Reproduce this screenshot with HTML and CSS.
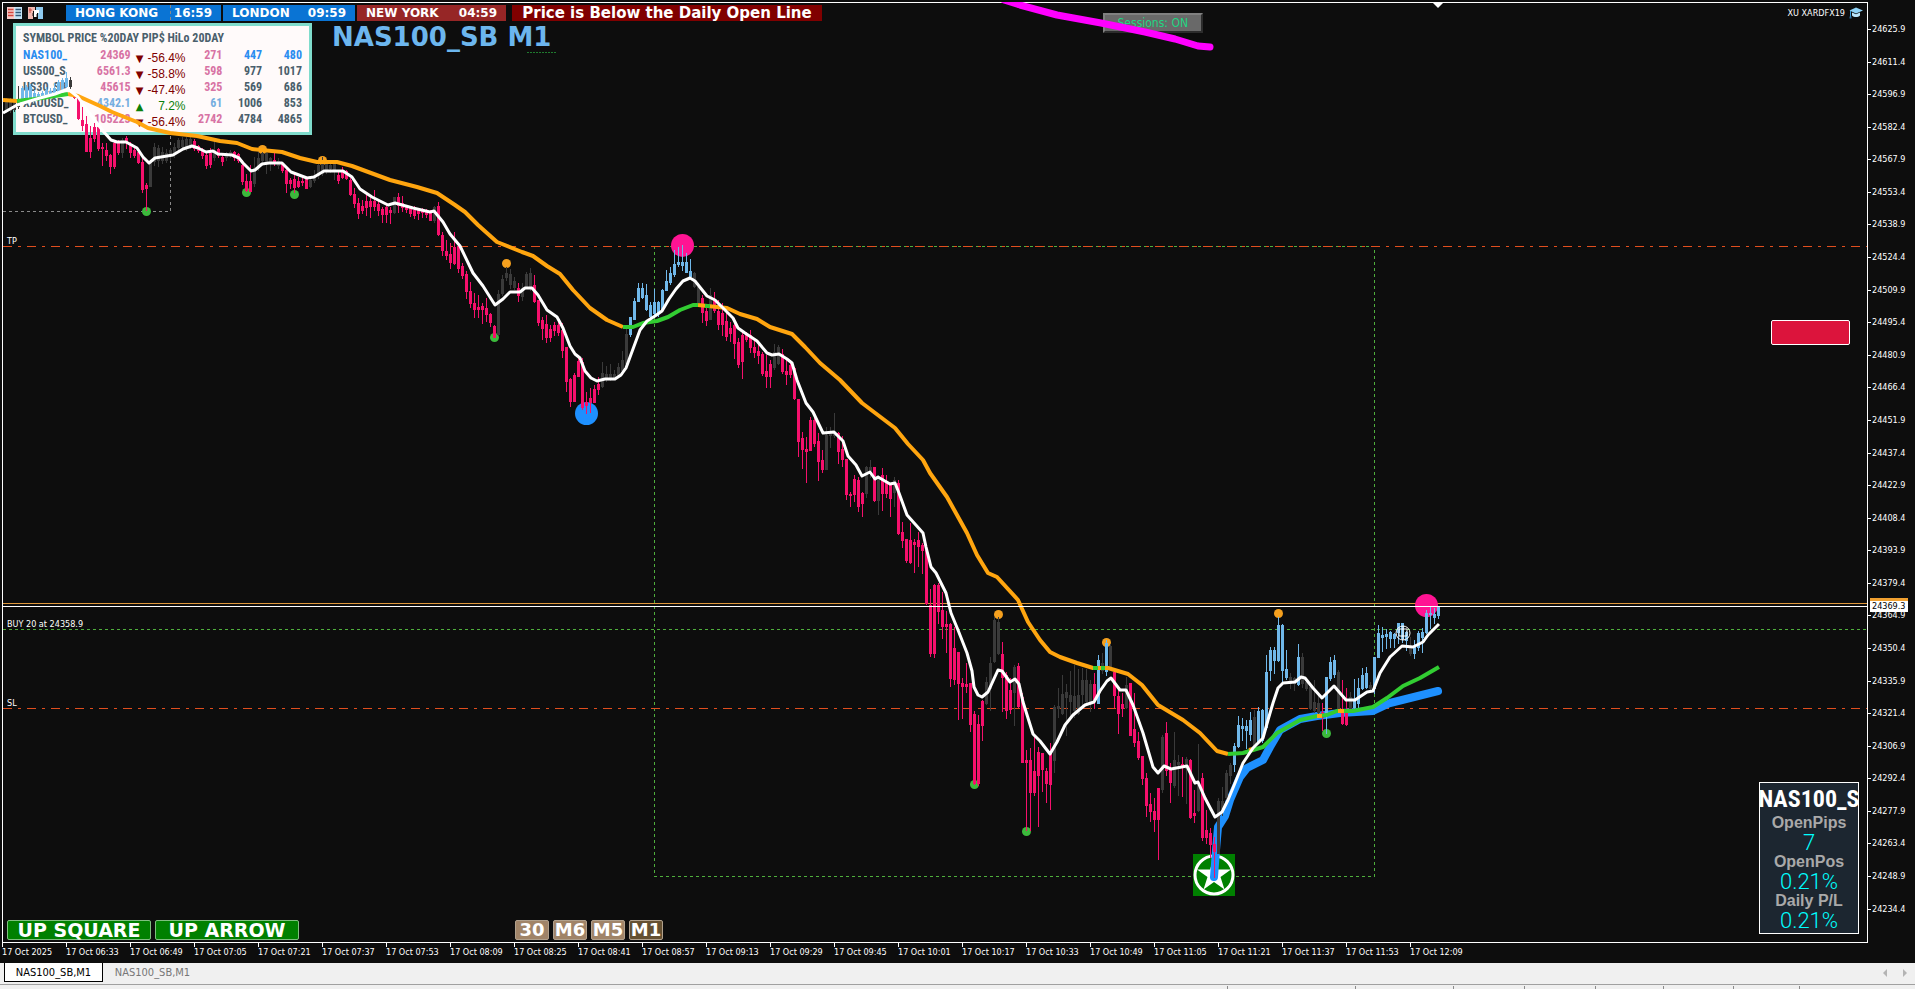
FILE: index.html
```html
<!DOCTYPE html>
<html lang="en">
<head>
    <meta charset="UTF-8">
    <meta name="viewport" content="width=device-width, initial-scale=1.0">
    <title>NAS100_SB,M1</title>
    <link rel="stylesheet" href="styles.css">
</head>
<body>
    <div class="terminal">
        <main class="chart">
            <div class="chart-main">
                <section class="plot">
                    <div class="top-row">
                        <div class="tools">
                            <svg class="tool-icon" viewBox="0 0 15 12" aria-hidden="true">
                                <rect x="0" y="0" width="15" height="12" fill="#f4f4f4"/>
                                <path d="M0 0h7.500v12h-7.500z" fill="#f6c9c5"/>
                                <path d="M7.500 0h7.500v12h-7.500z" fill="#c5e4f6"/>
                                <path d="M1 2.500h5.500M1 5.500h5.500M1 8.500h5.500" stroke="#d4453c" stroke-width="1.600"/>
                                <path d="M8.500 2.500h5.500M8.500 5.500h5.500M8.500 8.500h5.500" stroke="#31597a" stroke-width="1.600"/>
                            </svg>
                            <svg class="tool-icon" viewBox="0 0 15 12" aria-hidden="true">
                                <path d="M0 0h7v4H5v8H0z" fill="#f3b9b1"/>
                                <path d="M8 0h7v12h-5V5H8z" fill="#8fcbf0"/>
                                <path d="M2 1v5M1 3h3" stroke="#cf4d43" stroke-width="1"/>
                                <path d="M6 3h5v3H9v4H6z" fill="#fff"/>
                                <path d="M9 7v3M5 6v3" stroke="#222" stroke-width="1"/>
                            </svg>
                        </div>
                        <div class="sessions">
                            <div class="session open hong-kong"><span>HONG KONG</span><span>16:59</span></div>
                            <div class="session open london"><span>LONDON</span><span>09:59</span></div>
                            <div class="session closed new-york"><span>NEW YORK</span><span>04:59</span></div>
                        </div>
                        <div class="notice">Price is Below the Daily Open Line</div>
                        <div class="expert">
                            <span>XU XARDFX19</span>
                            <svg class="cap-icon" viewBox="0 0 14 12" aria-hidden="true">
                                <path d="M7 0.500L14 3.500L7 6.500L0.500 3.500z" fill="#8fd3f7"/>
                                <path d="M3 5.500v3c2 2 6 2 8 0v-3L7 7.200z" fill="#b9e4fb"/>
                                <path d="M1.500 4v6" stroke="#3b9bd8" stroke-width="1"/>
                                <rect x="0.500" y="9.500" width="2" height="2" fill="#2d6c9c"/>
                            </svg>
                        </div>
                    </div>
                    <div class="second-row">
                        <table class="scanner">
                            <caption>SYMBOL PRICE %20DAY PIP$ HiLo 20DAY</caption>
                            <tbody>
                                <tr class="current"><th scope="row">NAS100_</th><td class="down">24369</td><td class="pct fall"><span>▼</span>-56.4%</td><td class="down">271</td><td>447</td><td>480</td></tr>
                                <tr><th scope="row">US500_S</th><td class="down">6561.3</td><td class="pct fall"><span>▼</span>-58.8%</td><td class="down">598</td><td>977</td><td>1017</td></tr>
                                <tr><th scope="row">US30_SB</th><td class="down">45615</td><td class="pct fall"><span>▼</span>-47.4%</td><td class="down">325</td><td>569</td><td>686</td></tr>
                                <tr><th scope="row">XAUUSD_</th><td class="up">4342.1</td><td class="pct rise"><span>▲</span>7.2%</td><td class="up">61</td><td>1006</td><td>853</td></tr>
                                <tr><th scope="row">BTCUSD_</th><td class="down">105223</td><td class="pct fall"><span>▼</span>-56.4%</td><td class="down">2742</td><td>4784</td><td>4865</td></tr>
                            </tbody>
                        </table>
                        <h1>NAS100_SB M1</h1>
                    </div>
                    <button class="sessions-toggle" type="button">Sessions: ON</button>
                    <button class="alert-button" type="button" aria-label="Alert"></button>

                    <aside class="account">
                        <h2>NAS100_S</h2>
                        <dl>
                            <dt>OpenPips</dt><dd>7</dd>
                            <dt>OpenPos</dt><dd>0.21%</dd>
                            <dt>Daily P/L</dt><dd>0.21%</dd>
                        </dl>
                    </aside>

                    <div class="bottom-row">
                        <button class="signal" type="button">UP SQUARE</button>
                        <button class="signal" type="button">UP ARROW</button>
                        <div class="timeframes">
                            <button type="button">30</button>
                            <button type="button">M6</button>
                            <button type="button">M5</button>
                            <button class="active" type="button">M1</button>
                        </div>
                    </div>

                    <svg class="canvas" viewBox="2 2 1866 941" preserveAspectRatio="none">
                        <g class="crisp">
                            <path class="dash-gray" d="M170.500 5V21M170.500 136V211.500H3"/>
                            <path class="dash-green" d="M654.500 246V876.500H1374.500V246.500H654"/>
                            <path class="dash-green" d="M3 629.500H1867"/>
                            <path class="dash-stop" d="M3 246.500H1867M3 708.500H1867"/>
                            <path class="ask-line" d="M3 603.500H1867"/>
                            <path class="dash-dark" d="M527 52.500H556"/>
                        </g>
                        <path d="M1433 3h10l-5 5z" fill="#fff"/>
                        <g id="dots"></g>
                        <rect x="1193" y="854" width="42" height="42" fill="#008000"/>
                        <circle cx="1214" cy="875" r="19" fill="none" stroke="#fff" stroke-width="3"/>
                        <path d="M1214 857l4 12.500h13l-10.500 7.500l4 12.500l-10.500-7.500l-10.500 7.500l4-12.500l-10.500-7.500h13z" fill="#fff"/>
                        <path class="slow" d="M1214 877L1216 850L1218 827L1225 816L1230 800L1240 777L1247 768L1263 760L1270 747L1280 730L1300 719L1317 716L1340 713L1373 711L1390 703L1438 691"/>
                        <path class="daily" d="M1004 0L1020 5L1057 15L1101 23L1145 32L1175 39L1198 46L1210 47"/>
                        <g id="candles" class="crisp"></g>
                        <path class="trend" d="M3 100L17 101M68 94L78 96L100 106L112 112L137 122L148 128L170 133L197 136L220 141L237 143L252 149L282 152L300 158L317 162L337 162L352 166L390 180L417 187L437 193L455 205L465 212L478 225L497 242L522 252L533 256L547 266L560 274L573 290L590 308L607 320L623 327M698 305L727 308L740 314L757 319L770 327L792 334L805 347L820 363L840 380L862 403L895 428L908 444L923 460L930 473L947 497L967 533L977 555L988 573L997 577L1018 600L1028 622L1040 640L1050 652L1060 657L1077 663L1093 668L1108 668L1128 674L1142 685L1158 705L1183 720L1200 733L1217 751L1228 754"/>
                        <path class="trend bull" d="M17 101L35 99L68 94M623 327L633 327L643 323L657 321L668 317L680 310L693 305L698 305M705 306L710 306M1093 668L1098 668M1101 668L1105 668M1228 754L1243 753L1263 747L1277 733L1300 720L1317 716L1327 715L1337 711L1353 711L1373 707L1387 698L1403 686L1420 678L1439 667"/>
                        <path class="trend" d="M1249 750L1253 749M1317 716L1322 716M1338 711L1344 711"/>
                        <path class="fast" d="M3 113L17 105L40 98L55 94L68 89L78 97L90 114L103 131L111 140L117 142L126 142L137 148L143 157L149 163L155 158L173 155L183 149L192 146L198 148L206 152L213 151L218 154L232 155L239 158L243 163L251 171L255 170L262 164L269 163L282 163L291 172L307 178L314 177L324 171L343 171L352 177L360 189L372 197L388 205L395 203L413 208L430 212L434 211L443 222L450 234L460 246L473 273L483 286L495 305L503 299L510 292L520 292L525 288L532 288L538 295L547 310L557 317L563 328L570 346L575 354L580 358L585 371L591 378L597 381L605 379L615 379L621 375L626 368L633 349L640 330L647 321L655 316L662 311L669 299L676 289L683 281L690 278L695 281L707 296L715 300L722 307L733 318L738 328L745 333L757 341L767 353L772 355L779 354L787 359L792 363L797 380L806 403L813 412L823 433L834 432L843 441L848 456L856 465L862 476L870 472L875 479L878 477L890 484L895 483L899 493L907 515L923 533L926 547L931 567L936 573L946 593L951 613L958 630L967 653L972 671L974 687L978 695L982 697L988 692L993 681L998 670L1002 671L1010 682L1015 679L1019 684L1023 702L1033 734L1040 741L1050 754L1057 742L1065 725L1073 715L1085 705L1094 702L1100 691L1107 681L1111 678L1120 690L1126 690L1133 705L1143 733L1153 767L1158 773L1164 766L1171 769L1187 766L1195 783L1198 782L1205 798L1215 817L1222 812L1228 800L1235 783L1243 763L1253 748L1263 738L1268 720L1273 703L1278 688L1283 683L1295 682L1301 677L1305 678L1313 688L1322 698L1334 686L1346 700L1355 700L1367 692L1373 691L1380 673L1390 657L1402 646L1413 647L1423 642L1428 635L1439 624"/>
                        <g class="entry-mark">
                            <circle cx="1403" cy="633" r="7"/>
                            <path d="M1399 629h8v7h-8zM1403 626v14"/>
                        </g>
                        <path class="bid-line crisp" d="M3 606.500H1867"/>
                        <text class="line-label" x="7" y="244">TP</text>
                        <text class="line-label" x="7" y="627">BUY 20 at 24358.9</text>
                        <text class="line-label" x="7" y="706">SL</text>
                    </svg>
                </section>

                <div class="price-axis">
                    <ol>
                        <li>24625.9</li><li>24611.4</li><li>24596.9</li><li>24582.4</li><li>24567.9</li><li>24553.4</li><li>24538.9</li>
                        <li>24524.4</li><li>24509.9</li><li>24495.4</li><li>24480.9</li><li>24466.4</li><li>24451.9</li><li>24437.4</li>
                        <li>24422.9</li><li>24408.4</li><li>24393.9</li><li>24379.4</li><li>24364.9</li><li>24350.4</li><li>24335.9</li>
                        <li>24321.4</li><li>24306.9</li><li>24292.4</li><li>24277.9</li><li>24263.4</li><li>24248.9</li><li>24234.4</li>
                    </ol>
                    <span class="price-tag">24369.3</span>
                </div>
            </div>
            <ol class="time-axis">
                <li>17 Oct 2025</li><li>17 Oct 06:33</li><li>17 Oct 06:49</li><li>17 Oct 07:05</li><li>17 Oct 07:21</li><li>17 Oct 07:37</li>
                <li>17 Oct 07:53</li><li>17 Oct 08:09</li><li>17 Oct 08:25</li><li>17 Oct 08:41</li><li>17 Oct 08:57</li><li>17 Oct 09:13</li>
                <li>17 Oct 09:29</li><li>17 Oct 09:45</li><li>17 Oct 10:01</li><li>17 Oct 10:17</li><li>17 Oct 10:33</li><li>17 Oct 10:49</li>
                <li>17 Oct 11:05</li><li>17 Oct 11:21</li><li>17 Oct 11:37</li><li>17 Oct 11:53</li><li>17 Oct 12:09</li>
            </ol>
        </main>

        <nav class="tab-bar">
            <a class="tab active" href="#">NAS100_SB,M1</a>
            <a class="tab" href="#">NAS100_SB,M1</a>
            <div class="tab-scroll">
                <button class="prev" type="button" aria-label="Previous tab"></button>
                <button class="next" type="button" aria-label="Next tab"></button>
            </div>
        </nav>
        <footer class="status-bar">
            <span class="w128"></span><span class="w98"></span><span class="w71"></span><span class="w71"></span><span class="w68"></span><span class="w70"></span><span class="w66"></span><span class="w116"></span>
        </footer>
    </div>
    <script src="chart.js"></script>
</body>
</html>
```

FILE: styles.css
```css
* {
    margin: 0;
    padding: 0;
    box-sizing: border-box;
}

body {
    background: #0d0d0d;
    color: white;
    font-family: "DejaVu Sans Condensed", "DejaVu Sans", sans-serif;
    font-size: 9px;
}

ol {
    list-style: none;
}

button {
    font-family: inherit;
    cursor: pointer;
}

.terminal {
    height: 100vh;
    display: flex;
    flex-direction: column;
    overflow: hidden;
}

.chart {
    flex: 1;
    display: flex;
    flex-direction: column;
    min-height: 0;
}

.chart-main {
    flex: 1;
    display: flex;
    padding: 2px 0 0 2px;
    min-height: 0;
}

.plot {
    flex: 1;
    position: relative;
    border: 1px solid white;
    padding: 2px 4px;
}

/* Header over the chart */
.top-row {
    display: flex;
    align-items: center;
    height: 16px;
}

.tools {
    display: flex;
    gap: 6px;
    width: 59px;
}

.tool-icon {
    width: 15px;
    height: 12px;
}

.sessions {
    display: flex;
    gap: 2px;
    margin-right: 6px;
}

.session {
    display: flex;
    justify-content: space-between;
    height: 16px;
    padding: 0 9px;
    font-family: "DejaVu Sans", sans-serif;
    font-size: 12px;
    font-weight: bold;
    line-height: 16px;
    white-space: nowrap;
}

.open {
    background: #0a74d4;
}

.closed {
    background: #962626;
}

.hong-kong {
    width: 155px;
}

.london {
    width: 132px;
}

.new-york {
    width: 149px;
}

.notice {
    height: 16px;
    width: 310px;
    background: #800000;
    font-family: "DejaVu Sans", sans-serif;
    font-size: 15px;
    font-weight: bold;
    line-height: 16px;
    text-align: center;
    white-space: nowrap;
}

.expert {
    display: flex;
    align-items: center;
    gap: 4px;
    margin-left: auto;
}

.cap-icon {
    width: 14px;
    height: 12px;
}

.second-row {
    display: flex;
    align-items: flex-start;
    gap: 20px;
    padding: 2px 6px;
}

.second-row h1 {
    color: #6cb6ee;
    font-family: "DejaVu Sans", sans-serif;
    font-size: 26px;
    font-weight: bold;
    line-height: 28px;
}

/* Symbol scanner */
.scanner {
    display: block;
    width: 299px;
    height: 112px;
    padding: 5px 7px;
    border: 3px solid #7fdccc;
    background: #fffafa;
    border-spacing: 0;
    color: #4a5f6c;
    font-family: Impact, "Liberation Sans Narrow", "Roboto Condensed", "Open Sans Condensed", "DejaVu Sans Condensed", sans-serif;
    font-size: 12px;
    font-weight: bold;
}

.scanner caption {
    padding-bottom: 4px;
    line-height: 14px;
    text-align: left;
    white-space: nowrap;
}

.scanner th {
    width: 58px;
    text-align: left;
}

.scanner td {
    width: 40px;
    text-align: right;
}

.scanner th,
.scanner td {
    height: 16px;
    line-height: 12px;
    vertical-align: top;
}

.scanner td:nth-child(2) {
    width: 50px;
}

.scanner td:nth-child(4) {
    width: 37px;
}

.scanner td.pct {
    width: 55px;
    padding: 3px 0 0 5px;
    font-family: "Liberation Sans", sans-serif;
    font-weight: normal;
    line-height: 13px;
}

.scanner .pct span {
    float: left;
    font-family: "DejaVu Sans", sans-serif;
    font-size: 10px;
}

.scanner .current {
    color: #2a8cf0;
}

.scanner .down {
    color: #d873a4;
}

.scanner .up {
    color: #76aee0;
}

.scanner .fall {
    color: #800000;
}

.scanner .rise {
    color: #0a800a;
}

/* Objects pinned to the chart */
.sessions-toggle {
    position: absolute;
    top: 10px;
    left: 59%;
    width: 100px;
    height: 20px;
    background: #696969;
    border: 2px outset #808080;
    color: #22d683;
    font-size: 12px;
    line-height: 16px;
}

.alert-button {
    position: absolute;
    top: 317px;
    right: 17px;
    width: 79px;
    height: 25px;
    background: #dc143c;
    border: 1px solid white;
    border-radius: 2px;
}

.account {
    position: absolute;
    right: 8px;
    bottom: 8px;
    width: 100px;
    height: 152px;
    padding-top: 1px;
    border: 1px solid white;
    background: #1c2630;
    text-align: center;
    overflow: hidden;
}

.account h2 {
    display: flex;
    justify-content: center;
    font-family: Impact, "Liberation Sans Narrow", "Roboto Condensed", "Open Sans Condensed", "DejaVu Sans Condensed", sans-serif;
    font-size: 24px;
    font-weight: bold;
    line-height: 30px;
}

.account dt {
    color: #a9a9a9;
    font-family: "Liberation Sans", sans-serif;
    font-size: 16px;
    font-weight: bold;
    line-height: 18px;
}

.account dd {
    color: #0ff;
    font-family: Roboto, sans-serif;
    font-size: 22px;
    font-weight: 300;
    line-height: 21px;
}

.bottom-row {
    position: absolute;
    left: 4px;
    bottom: 2px;
    display: flex;
    gap: 4px;
}

.bottom-row button {
    height: 20px;
    border: 1px solid #b0a08c;
    border-radius: 2px;
    background: #a08468;
    color: white;
    font-family: "DejaVu Sans", sans-serif;
    font-size: 18px;
    font-weight: bold;
    line-height: 18px;
    white-space: nowrap;
}

.bottom-row .signal {
    width: 144px;
    border-color: #7fbf7f;
    background: #008000;
    font-size: 19px;
}

.timeframes {
    display: flex;
    gap: 4px;
    margin-left: 212px;
}

.timeframes button {
    display: flex;
    align-items: center;
    justify-content: center;
    width: 34px;
}

.bottom-row .active {
    background: #645032;
}

/* Chart drawing */
.canvas {
    position: absolute;
    top: -1px;
    left: -1px;
    width: calc(100% + 2px);
    height: calc(100% + 2px);
    pointer-events: none;
}

.canvas path {
    fill: none;
}

.canvas path[fill] {
    fill: white;
}

.crisp {
    shape-rendering: crispEdges;
}

.canvas .dash-gray {
    stroke: #8a8a8a;
    stroke-dasharray: 3 3;
}

.canvas .dash-green {
    stroke: #4fae3c;
    stroke-dasharray: 3 3;
}

.canvas .dash-dark {
    stroke: #1f7a2e;
    stroke-dasharray: 2 1;
}

.canvas .dash-stop {
    stroke: #e04e1e;
    stroke-dasharray: 9 6 3 6;
}

.canvas .ask-line {
    stroke: #e0983c;
}

.canvas .bid-line {
    stroke: white;
}

.canvas .slow {
    stroke: #1e90ff;
    stroke-width: 8;
    stroke-linejoin: round;
    stroke-linecap: round;
}

.canvas .daily {
    stroke: #f0f;
    stroke-width: 7;
    stroke-linejoin: round;
    stroke-linecap: round;
}

.canvas .trend {
    stroke: #ffa50f;
    stroke-width: 4;
    stroke-linejoin: round;
}

.canvas .bull {
    stroke: #32cd32;
}

.canvas .fast {
    stroke: white;
    stroke-width: 3;
    stroke-linejoin: round;
}

.entry-mark {
    fill: none;
    stroke: white;
    stroke-width: 1;
}

.line-label {
    fill: white;
    font-size: 9px;
}

/* Axes */
.price-axis {
    position: relative;
    width: 47px;
}

.price-axis ol {
    height: 100%;
    padding: 22px 0 28px;
    display: flex;
    flex-direction: column;
    justify-content: space-between;
}

.price-axis li {
    display: flex;
    align-items: center;
    gap: 1px;
    height: 11px;
    line-height: 11px;
}

.price-axis li::before {
    content: "";
    width: 3px;
    height: 1px;
    background: white;
}

.price-tag {
    position: absolute;
    top: 63.3%;
    left: 2px;
    height: 14px;
    padding: 0 3px 0 2px;
    border-top: 3px solid #f0a030;
    background: white;
    color: black;
    line-height: 11px;
}

.time-axis {
    display: flex;
    height: 20px;
    padding-left: 2px;
}

.time-axis li {
    flex: none;
    width: 64px;
    line-height: 11px;
    white-space: nowrap;
}

.time-axis li::before {
    content: "";
    display: block;
    width: 1px;
    height: 4px;
    background: white;
}

/* Window tabs */
.tab-bar {
    display: flex;
    align-items: flex-start;
    height: 21px;
    padding: 0 4px;
    background: #f0f0f0;
}

.tab {
    width: 99px;
    height: 19px;
    color: #777;
    font-size: 11px;
    line-height: 20px;
    text-align: center;
    text-decoration: none;
}

.tab.active {
    border: 1px solid black;
    border-top: 0;
    background: white;
    color: black;
}

.tab-scroll {
    display: flex;
    gap: 16px;
    margin: 6px 4px 0 auto;
}

.tab-scroll button {
    width: 4px;
    height: 8px;
    border: 4px solid transparent;
    background: none;
}

.tab-scroll .prev {
    border-left: 0;
    border-right-color: #b4b4b4;
}

.tab-scroll .next {
    border-right: 0;
    border-left-color: #b4b4b4;
}

.status-bar {
    display: flex;
    justify-content: flex-end;
    height: 5px;
    padding-top: 1px;
    border-top: 1px solid #a0a0a0;
    background: #f0f0f0;
}

.status-bar span {
    border-left: 1px solid #8c8c8c;
}

.w66 { width: 66px; }
.w68 { width: 68px; }
.w70 { width: 70px; }
.w71 { width: 71px; }
.w98 { width: 98px; }
.w116 { width: 116px; }
.w128 { width: 128px; }
```

FILE: chart.js
```js
// One bar per token: colour, then high, body top, body bottom, low (4px per bar)
const bars = `
k98,100,110,112 k98,100,110,112 k99,101,109,111 k86,99,106,108 b86,88,98,104 b85,87,97,101 b84,86,98,100 b90,93,97,98 b92,94,96,98 b91,93,97,98
b87,90,96,97 b88,91,95,97 b83,88,93,95 b80,82,91,93 b78,80,90,91 b72,78,86,90 k77,80,86,88 r94,95,97,98 r97,98,118,119 r107,120,125,130
r116,124,151,151 r126,138,151,157 r123,127,138,141 r126,127,148,150 r143,147,148,165 r143,150,155,160 r154,155,166,173 r140,143,166,168 r140,143,152,154 k138,140,152,157
r136,138,142,148 r142,145,152,157 r148,150,155,157 r150,152,162,163 r158,162,189,192 r183,185,188,210 k160,162,186,186 k143,147,161,165 k145,148,160,166 k147,152,160,163
k149,153,160,162 k148,150,155,160 k143,147,152,157 k138,140,147,150 k137,140,146,150 k137,139,146,150 k135,139,145,148 r139,141,148,150 r145,146,150,152 r148,150,155,158
r152,155,165,168 r148,153,164,167 k140,150,157,160 r148,149,155,157 r153,157,161,165 k152,153,157,160 k150,152,155,157 r151,152,157,160 r153,154,160,162 r160,165,181,184
r174,181,190,191 r165,181,191,191 k157,168,183,186 k151,158,166,170 k150,153,160,165 k152,153,163,173 k157,158,162,170 r153,160,163,165 k158,161,165,168 r162,163,170,172
r168,170,183,192 r178,180,183,188 r174,179,187,192 r177,181,186,187 r178,181,182,185 r178,179,188,188 k179,180,186,187 k170,175,180,182 k163,165,175,178 k157,162,173,175
k160,163,170,173 k160,165,168,172 k162,164,170,179 r172,175,180,183 r167,170,177,178 r170,171,178,179 r178,180,194,195 r188,194,203,207 r198,203,213,218 r200,206,210,213
r192,201,207,215 r198,201,206,217 r190,201,206,210 r200,204,210,215 r207,209,214,222 r205,207,214,222 r207,210,212,223 k197,197,212,213 r193,197,205,212 r196,203,207,211
r205,207,209,212 r207,208,213,216 r206,210,215,218 r208,210,213,219 r208,211,212,217 r209,211,214,217 r210,213,220,220 k206,207,220,222 r202,206,234,235 r232,235,250,255
r240,251,255,259 r243,254,262,268 r232,247,263,264 r243,246,268,272 r263,266,275,278 r271,274,291,298 r282,291,303,307 r293,303,309,317 r295,307,309,317 r303,306,309,323
r298,308,314,321 r313,314,322,326 r325,326,337,337 k290,294,334,335 k275,279,293,295 k267,273,277,280 k269,274,284,288 k277,281,287,289 r283,288,295,301 k283,288,296,300
k272,274,287,288 k268,273,287,290 r275,285,301,302 r300,300,322,325 r317,320,328,339 r315,324,337,342 r325,329,337,341 r322,325,330,335 r322,325,332,335 r323,330,350,357
r347,347,381,391 r378,379,401,406 r373,375,401,401 r357,361,376,376 r358,362,407,409 r392,402,405,413 r388,398,402,412 r385,389,402,402 r377,384,389,394 k362,373,386,387
k366,374,378,381 k364,374,378,380 k370,374,377,379 k363,367,375,377 k351,360,370,372 k326,334,363,365 b317,317,334,336 b298,301,319,319 b283,288,301,301 b283,288,297,298
b284,295,309,310 b302,305,316,322 b289,302,313,317 b301,302,313,316 b289,290,309,310 b270,281,290,290 b267,273,282,284 b250,264,274,276 b247,262,264,266 b245,262,265,270
b253,262,272,272 b259,271,276,277 k272,273,286,287 k283,287,302,303 r295,298,312,322 r307,311,320,325 k288,295,319,319 r292,300,310,312 r300,311,324,329 r303,313,324,335
r310,321,336,340 r322,328,333,341 r318,325,343,358 r338,342,364,367 r332,335,361,378 r332,335,339,341 r330,335,347,352 r338,347,352,357 r343,351,355,363 r352,354,373,375
r355,371,376,387 r360,364,376,387 k344,352,367,369 k345,347,363,364 r349,354,371,373 r358,371,374,384 r363,365,374,377 r367,368,398,399 r399,399,441,456 r432,438,449,468
r437,449,451,482 r417,420,450,450 r417,420,443,446 r433,441,461,480 r450,460,469,472 k427,435,469,469 k427,433,435,447 k413,432,435,437 r432,433,451,463 r436,449,459,466
r459,459,494,499 r492,494,495,506 r475,479,494,501 r477,480,506,511 r492,493,503,516 k466,467,493,497 k460,467,470,477 r467,467,500,501 k475,478,500,514 r468,475,493,510
r475,483,493,497 r483,483,498,516 k477,480,492,506 r480,483,533,534 r522,532,540,547 r539,539,560,562 r523,540,562,563 r539,542,544,572 r532,540,546,566 r543,545,550,573
r548,550,603,604 r589,605,653,656 r584,585,653,657 r583,585,611,623 r592,610,626,638 r611,624,626,652 r623,624,678,686 r627,648,679,684 r652,652,683,719 r678,683,686,718
r663,684,686,692 r683,683,724,731 r711,714,783,784 r715,724,783,785 r700,701,725,740 k677,682,703,704 k657,663,688,710 k617,620,661,662 k617,622,653,654 r642,654,677,711
r672,675,710,718 r678,690,709,713 k665,667,692,725 r663,666,706,707 r693,697,762,762 r750,760,762,830 r748,760,792,830 r737,771,792,795 r747,752,775,826 r753,753,769,791
r768,771,783,802 r743,753,784,809 k705,707,760,772 k688,706,708,717 k675,694,713,714 k684,692,697,735 k671,695,701,717 k665,696,710,717 k669,695,713,714 k668,680,694,705
k669,680,701,703 k680,684,703,711 r673,684,699,708 b655,660,703,703 k653,663,670,673 b640,643,671,675 k644,646,667,668 r672,672,695,707 r687,696,713,733 r693,704,708,716
k677,685,707,708 r683,683,735,735 r693,729,742,746 r732,741,757,759 r756,756,778,784 r773,778,805,816 r793,804,811,821 r798,811,819,831 r788,788,819,859 k735,737,789,792
r722,733,770,775 r763,770,782,802 k732,760,785,787 k755,762,764,795 r757,764,766,796 k757,759,768,803 r759,760,817,818 r790,813,815,822 k744,782,810,811 r773,778,837,840
r810,830,837,843 r828,833,844,857 r837,844,851,877 k798,801,853,853 k787,801,808,815 k770,773,797,799 k763,765,775,783 b743,746,764,771 b716,725,746,747 b718,726,728,740
b720,726,730,748 b712,720,734,740 k710,717,747,748 b707,711,742,743 b709,710,740,742 b655,672,727,729 b647,650,670,680 b647,650,660,673 b617,625,660,661 b624,625,670,682
b650,669,677,679 k673,677,683,688 k677,678,683,690 b644,657,684,685 k653,657,683,687 k680,682,688,690 k683,687,708,709 k680,702,710,712 k692,703,712,714 r703,712,717,730
b677,677,713,733 b657,662,678,680 b655,660,674,677 k670,672,710,711 r680,710,723,724 r688,712,724,725 k692,697,710,711 b679,700,707,708 b678,688,703,707 b668,675,688,689
b667,673,687,688 k682,685,688,692 b657,657,688,693 b625,633,657,657 b627,635,637,651 b629,634,636,648 b631,632,638,647 b633,634,638,647 b623,623,632,643 b623,623,638,642
b631,632,640,650 k637,647,653,655 b640,647,653,658 b631,633,647,650 b628,632,637,652 b610,613,632,633 b607,613,614,628 b608,614,617,623 b607,607,615,618
`.trim().split(/\s+/);

const colors = { r: '#f5106c', k: '#3a3a3a', b: '#70b8ea' };

// Swing marks: x, y, radius, colour
const dots = [
    [146, 211, 4, '#3cb93c'], [246, 192, 4, '#3cb93c'], [294, 194, 4, '#3cb93c'], [494, 337, 4, '#3cb93c'],
    [974, 784, 4, '#3cb93c'], [1026, 831, 4, '#3cb93c'], [1326, 733, 4, '#3cb93c'],
    [262, 149, 4, '#f5a01e'], [322, 160, 4, '#f5a01e'], [506, 263, 4, '#f5a01e'], [998, 614, 4, '#f5a01e'],
    [1106, 642, 4, '#f5a01e'], [1278, 613, 4, '#f5a01e'],
    [682, 245, 11, '#ff1493'], [586, 413, 11, '#1e90ff'], [1426, 605, 11, '#ff1493']
];

document.getElementById('candles').innerHTML = bars.map((bar, i) => {
    const [high, top, bottom, low] = bar.slice(1).split(',').map(Number);
    const x = 6 + i * 4;
    const fill = colors[bar[0]];
    return `<rect x="${x}" y="${high}" width="1" height="${low - high + 1}" fill="${fill}"/>` +
        `<rect x="${x - 1}" y="${top}" width="3" height="${bottom - top + 1}" fill="${fill}"/>`;
}).join('');

document.getElementById('dots').innerHTML = dots.map(([x, y, r, fill]) =>
    `<circle cx="${x + 0.5}" cy="${y + 0.5}" r="${r + 0.5}" fill="${fill}"/>`
).join('');
```
